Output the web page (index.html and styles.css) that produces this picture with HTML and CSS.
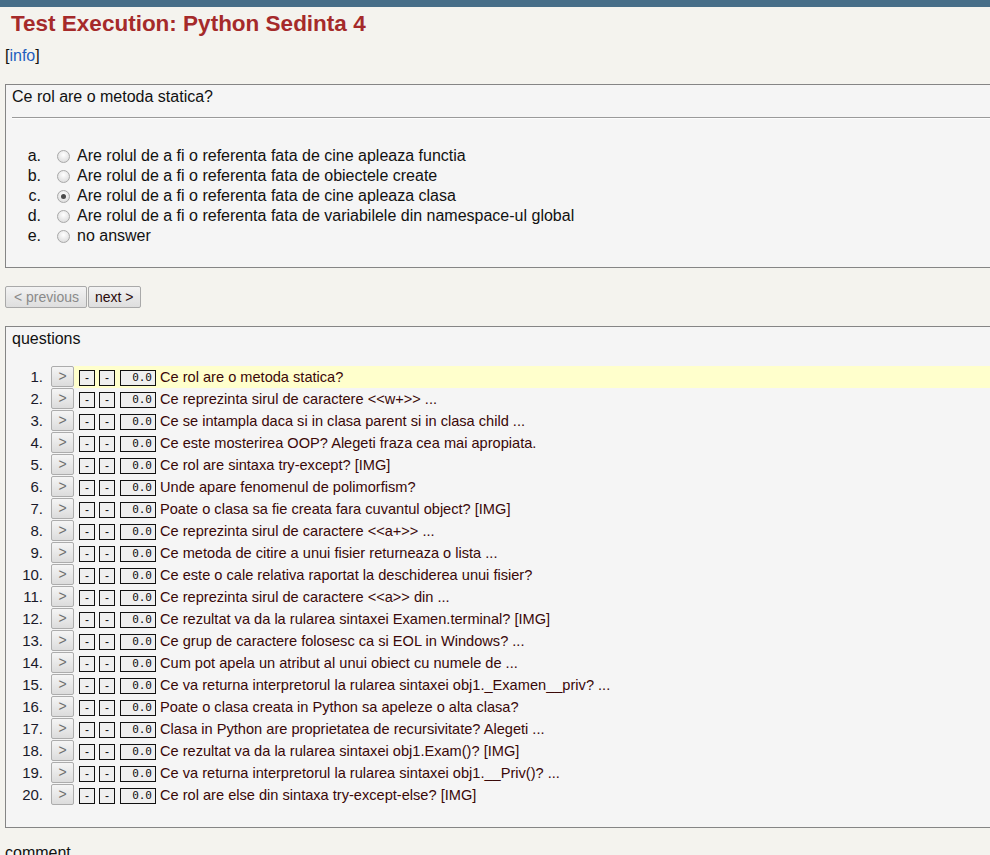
FILE: index.html
```html
<!DOCTYPE html>
<html>
<head>
<meta charset="utf-8">
<title>Test Execution: Python Sedinta 4</title>
<link rel="stylesheet" href="styles.css">
</head>
<body>
<div class="topbar"></div>
<div class="page">
  <h1 class="title">Test Execution: Python Sedinta 4</h1>
  <div class="info">[<a href="#" class="info-link">info</a>]</div>

  <div class="panel question-panel">
    <div class="q-text">Ce rol are o metoda statica?</div>
    <hr class="sep">
    <div class="options">
      <label class="opt"><span class="letter">a.</span><span class="radio"></span><span class="opt-text">Are rolul de a fi o referenta fata de cine apleaza functia</span></label>
      <label class="opt"><span class="letter">b.</span><span class="radio"></span><span class="opt-text">Are rolul de a fi o referenta fata de obiectele create</span></label>
      <label class="opt"><span class="letter">c.</span><span class="radio checked"></span><span class="opt-text">Are rolul de a fi o referenta fata de cine apleaza clasa</span></label>
      <label class="opt"><span class="letter">d.</span><span class="radio"></span><span class="opt-text">Are rolul de a fi o referenta fata de variabilele din namespace-ul global</span></label>
      <label class="opt"><span class="letter">e.</span><span class="radio"></span><span class="opt-text">no answer</span></label>
    </div>
  </div>

  <div class="nav">
    <button class="btn disabled">&lt; previous</button><button class="btn">next &gt;</button>
  </div>

  <div class="panel questions-panel">
    <div class="q-text">questions</div>
    <div class="qlist">
      <div class="row"><span class="num">1.</span><span class="go">&gt;</span><span class="cell current"><span class="box">-</span><span class="box">-</span><span class="score">0.0</span><span class="qt">Ce rol are o metoda statica?</span></span></div>
      <div class="row"><span class="num">2.</span><span class="go">&gt;</span><span class="cell"><span class="box">-</span><span class="box">-</span><span class="score">0.0</span><span class="qt">Ce reprezinta sirul de caractere &lt;&lt;w+&gt;&gt; ...</span></span></div>
      <div class="row"><span class="num">3.</span><span class="go">&gt;</span><span class="cell"><span class="box">-</span><span class="box">-</span><span class="score">0.0</span><span class="qt">Ce se intampla daca si in clasa parent si in clasa child ...</span></span></div>
      <div class="row"><span class="num">4.</span><span class="go">&gt;</span><span class="cell"><span class="box">-</span><span class="box">-</span><span class="score">0.0</span><span class="qt">Ce este mosterirea OOP? Alegeti fraza cea mai apropiata.</span></span></div>
      <div class="row"><span class="num">5.</span><span class="go">&gt;</span><span class="cell"><span class="box">-</span><span class="box">-</span><span class="score">0.0</span><span class="qt">Ce rol are sintaxa try-except? [IMG]</span></span></div>
      <div class="row"><span class="num">6.</span><span class="go">&gt;</span><span class="cell"><span class="box">-</span><span class="box">-</span><span class="score">0.0</span><span class="qt">Unde apare fenomenul de polimorfism?</span></span></div>
      <div class="row"><span class="num">7.</span><span class="go">&gt;</span><span class="cell"><span class="box">-</span><span class="box">-</span><span class="score">0.0</span><span class="qt">Poate o clasa sa fie creata fara cuvantul object? [IMG]</span></span></div>
      <div class="row"><span class="num">8.</span><span class="go">&gt;</span><span class="cell"><span class="box">-</span><span class="box">-</span><span class="score">0.0</span><span class="qt">Ce reprezinta sirul de caractere &lt;&lt;a+&gt;&gt; ...</span></span></div>
      <div class="row"><span class="num">9.</span><span class="go">&gt;</span><span class="cell"><span class="box">-</span><span class="box">-</span><span class="score">0.0</span><span class="qt">Ce metoda de citire a unui fisier returneaza o lista ...</span></span></div>
      <div class="row"><span class="num">10.</span><span class="go">&gt;</span><span class="cell"><span class="box">-</span><span class="box">-</span><span class="score">0.0</span><span class="qt">Ce este o cale relativa raportat la deschiderea unui fisier?</span></span></div>
      <div class="row"><span class="num">11.</span><span class="go">&gt;</span><span class="cell"><span class="box">-</span><span class="box">-</span><span class="score">0.0</span><span class="qt">Ce reprezinta sirul de caractere &lt;&lt;a&gt;&gt; din ...</span></span></div>
      <div class="row"><span class="num">12.</span><span class="go">&gt;</span><span class="cell"><span class="box">-</span><span class="box">-</span><span class="score">0.0</span><span class="qt">Ce rezultat va da la rularea sintaxei Examen.terminal? [IMG]</span></span></div>
      <div class="row"><span class="num">13.</span><span class="go">&gt;</span><span class="cell"><span class="box">-</span><span class="box">-</span><span class="score">0.0</span><span class="qt">Ce grup de caractere folosesc ca si EOL in Windows? ...</span></span></div>
      <div class="row"><span class="num">14.</span><span class="go">&gt;</span><span class="cell"><span class="box">-</span><span class="box">-</span><span class="score">0.0</span><span class="qt">Cum pot apela un atribut al unui obiect cu numele de ...</span></span></div>
      <div class="row"><span class="num">15.</span><span class="go">&gt;</span><span class="cell"><span class="box">-</span><span class="box">-</span><span class="score">0.0</span><span class="qt">Ce va returna interpretorul la rularea sintaxei obj1._Examen__priv? ...</span></span></div>
      <div class="row"><span class="num">16.</span><span class="go">&gt;</span><span class="cell"><span class="box">-</span><span class="box">-</span><span class="score">0.0</span><span class="qt">Poate o clasa creata in Python sa apeleze o alta clasa?</span></span></div>
      <div class="row"><span class="num">17.</span><span class="go">&gt;</span><span class="cell"><span class="box">-</span><span class="box">-</span><span class="score">0.0</span><span class="qt">Clasa in Python are proprietatea de recursivitate? Alegeti ...</span></span></div>
      <div class="row"><span class="num">18.</span><span class="go">&gt;</span><span class="cell"><span class="box">-</span><span class="box">-</span><span class="score">0.0</span><span class="qt">Ce rezultat va da la rularea sintaxei obj1.Exam()? [IMG]</span></span></div>
      <div class="row"><span class="num">19.</span><span class="go">&gt;</span><span class="cell"><span class="box">-</span><span class="box">-</span><span class="score">0.0</span><span class="qt">Ce va returna interpretorul la rularea sintaxei obj1.__Priv()? ...</span></span></div>
      <div class="row"><span class="num">20.</span><span class="go">&gt;</span><span class="cell"><span class="box">-</span><span class="box">-</span><span class="score">0.0</span><span class="qt">Ce rol are else din sintaxa try-except-else? [IMG]</span></span></div>
    </div>
  </div>

  <div class="comment">comment</div>
</div>
</body>
</html>
```
FILE: styles.css
```css
html, body {
  margin: 0;
  padding: 0;
  overflow: hidden;
}
body {
  background: #f4f3ee;
  font-family: Arial, "Liberation Sans", sans-serif;
  color: #111;
}
.topbar {
  height: 7px;
  background: #476e88;
}
.page {
  padding: 0 5px;
}
.title {
  margin: 4px 0 0 6px;
  font-size: 22.5px;
  line-height: 26px;
  font-weight: bold;
  color: #a52a2a;
}
.info {
  margin-top: 10px;
  font-size: 16px;
  line-height: 18px;
  color: #111;
}
.info-link {
  color: #1f5fbf;
  text-decoration: none;
}
.panel {
  margin-right: -40px;
  border: 1px solid #858585;
  background: #f5f5f5;
  padding: 3px 6px 21px 6px;
}
.question-panel {
  margin-top: 19px;
}
.q-text {
  font-size: 16px;
  line-height: 18px;
}
.sep {
  margin: 11px 0 0 0;
  height: 0;
  border: 0;
  border-top: 1px solid #9a9a9a;
  border-bottom: 1px solid #fdfdfd;
}
.options {
  margin-top: 27px;
  display: flex;
  flex-direction: column;
}
.opt {
  display: flex;
  align-items: center;
  height: 20px;
  font-size: 16px;
}
.letter {
  width: 29px;
  text-align: right;
}
.radio {
  width: 11px;
  height: 11px;
  margin: 0 7px 0 16px;
  border: 1px solid #a8a8a8;
  border-radius: 50%;
  background: radial-gradient(circle at 50% 35%, #ffffff 0%, #e6e6e6 60%, #d4d4d4 100%);
  position: relative;
}
.radio.checked::after {
  content: "";
  position: absolute;
  left: 3px;
  top: 3px;
  width: 5px;
  height: 5px;
  border-radius: 50%;
  background: #4a4a4a;
}
.nav {
  margin-top: 18px;
  display: flex;
  gap: 1px;
}
.btn {
  height: 22px;
  padding: 0 6px;
  font-family: Arial, "Liberation Sans", sans-serif;
  font-size: 14px;
  line-height: 20px;
  color: #2a0a0a;
  border: 1px solid #a9a9a9;
  border-radius: 2px;
  background: linear-gradient(#f3f3f3, #dedede);
}
.btn.disabled {
  color: #8a8a8a;
  padding: 0 7px 0 8px;
}
.questions-panel {
  margin-top: 18px;
  padding-bottom: 21px;
}
.qlist {
  margin-top: 18px;
  display: flex;
  flex-direction: column;
}
.row {
  display: flex;
  height: 22px;
  font-size: 14.6px;
}
.num {
  width: 31px;
  text-align: right;
  line-height: 22px;
  font-size: 15px;
  color: #1a1a2a;
}
.go {
  margin-left: 8px;
  width: 21px;
  height: 19px;
  border: 1px solid #acacac;
  border-radius: 2px;
  background: linear-gradient(#f5f5f5, #dcdcdc);
  color: #707070;
  font-size: 14px;
  line-height: 19px;
  text-align: center;
}
.cell {
  flex: 1;
  display: flex;
  align-items: center;
  padding-left: 5px;
  gap: 4px;
}
.cell.current {
  background: #ffffcc;
}
.box, .score {
  height: 14px;
  border: 1px solid #111;
  background: #efefef;
  font-size: 12px;
  line-height: 14px;
  margin-top: 2px;
}
.box {
  width: 14px;
  text-align: center;
}
.box + .score {
  margin-left: 1px;
}
.score {
  width: 31px;
  padding-right: 3px;
  text-align: right;
  font-family: "DejaVu Sans Mono", "Liberation Mono", monospace;
  font-size: 11px;
}
.qt {
  color: #3a0808;
  line-height: 22px;
}
.comment {
  margin-top: 16px;
  font-size: 16px;
  line-height: 18px;
}
```
